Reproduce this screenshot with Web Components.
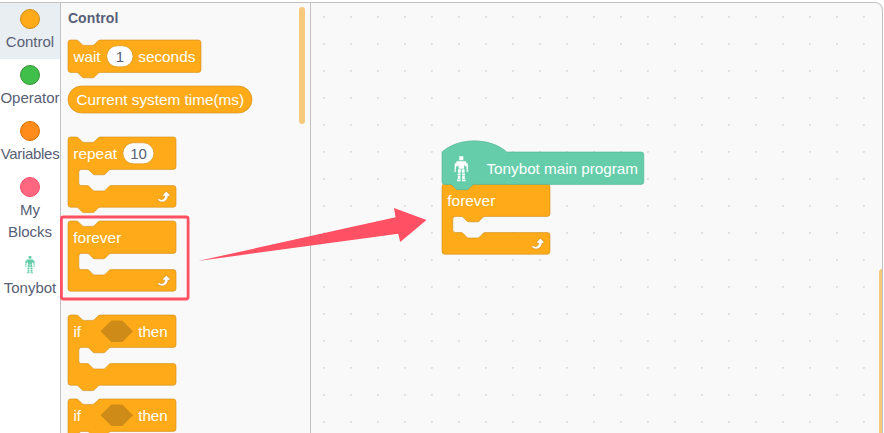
<!DOCTYPE html>
<html lang="en">
<head>
<meta charset="utf-8">
<title>Block editor</title>
<style>
html,body{margin:0;height:100%;overflow:hidden;background:#fff}
body{font-family:"Liberation Sans",Arial,sans-serif;color:#575e75}
</style>
</head>
<body>
<block-editor></block-editor>
<script>
const S = 0.675;
const NOTCH = 'c2 0 3 1 4 2l4 4c1 1 2 2 4 2h12c2 0 3-1 4-2l4-4c1-1 2-2 4-2';
const NOTCH_BACK = 'c-2 0-3 1-4 2l-4 4c-1 1-2 2-4 2h-12c-2 0-3-1-4-2l-4-4c-1-1-2-2-4-2';
const ROBOT = '<path d="M5 0h4v4h-4z M2.2 5h9.6l.6 5h-1.8l-.5-2-.5 4.500h-5.200l-.5-4.500-.5 2h-1.800z M.5 7h1.500l-.3 6.500h-1.500z M12 7h1.500l.3 6.500h-1.500z M0 14h1.800v1.500h-1.800z M12.200 14h1.800v1.500h-1.800z M3.700 13h2.800v3.500h-2.800z M7.500 13h2.800v3.500h-2.800z M3.300 17.300h3v1.500h-3z M7.700 17.300h3v1.500h-3z M3.500 19.400h2.600v3.300h-2.600z M7.900 19.400h2.600v3.300h-2.600z M2.700 23.400h3.600v1.600h-3.600z M7.700 23.400h3.600v1.600h-3.600z"/>';
const LOOP = '<path fill="#cf8b17" d="M23.3 11c-.3.6-.9 1-1.5 1h-1.600c-.1 1.300-.5 2.500-1.100 3.600-.9 1.700-2.300 3.200-4.100 4.100-1.700.9-3.600 1.200-5.500.9-1.800-.3-3.500-1.100-4.900-2.300-.7-.7-.7-1.900 0-2.600.6-.6 1.600-.7 2.300-.2h.1c.9.600 1.900.9 2.900.9s1.900-.3 2.700-.9c1.100-.8 1.800-2.100 1.800-3.500h-1.500c-.9 0-1.700-.7-1.700-1.700 0-.4.2-.9.5-1.200l4.400-4.400c.7-.6 1.700-.6 2.400 0L23 9.200c.5.5.6 1.200.3 1.800z"/><path fill="#fff" stroke="#fff" stroke-width=".5" d="M21.800 11h-2.600c0 1.500-.3 2.900-1 4.200-.8 1.600-2.100 2.800-3.700 3.600-1.500.8-3.300 1.100-4.900.8-1.600-.2-3.200-1-4.400-2.100-.4-.3-.4-.9-.1-1.200.3-.4.9-.4 1.200-.1 1 .7 2.200 1.100 3.400 1.100s2.300-.3 3.300-1c.9-.6 1.600-1.500 2-2.600.3-.9.4-1.800.2-2.800h-2.400c-.4 0-.7-.3-.7-.7 0-.2.1-.3.200-.4l4.400-4.400c.3-.3.7-.3.900 0L22 9.800c.3.300.4.600.3.900s-.3.300-.5.300z"/>';

function define(name, html, after) {
  const t = document.createElement('template');
  t.innerHTML = html;
  customElements.define(name, class extends HTMLElement {
    connectedCallback() {
      if (this.shadowRoot) return;
      this.attachShadow({mode: 'open'}).append(t.content.cloneNode(true));
      if (after) after(this, this.shadowRoot);
    }
  });
}

// Block outlines, in the block renderer's own units.
const shape = {
  stack: w => `M0 4a4 4 0 0 1 4-4H12${NOTCH}H${w-4}a4 4 0 0 1 4 4V44a4 4 0 0 1-4 4H48${NOTCH_BACK}H4a4 4 0 0 1-4-4z`,
  reporter: w => `M20 0H${w-20}a20 20 0 0 1 0 40H20a20 20 0 0 1 0-40z`,
  hat: w => `M0 0C25-22 71-22 96 0H${w-4}a4 4 0 0 1 4 4V44a4 4 0 0 1-4 4H48${NOTCH_BACK}H4a4 4 0 0 1-4-4z`,
  wrap: (w, cap) => `M0 4a4 4 0 0 1 4-4H12${NOTCH}H${w-4}a4 4 0 0 1 4 4V44a4 4 0 0 1-4 4H64${NOTCH_BACK}h-8a4 4 0 0 0-4 4v16a4 4 0 0 0 4 4h8${NOTCH}H${w-4}a4 4 0 0 1 4 4v24a4 4 0 0 1-4 4${cap ? 'H4' : 'H48' + NOTCH_BACK + 'H4'}a4 4 0 0 1-4-4z`
};
const word = (s, x, y, w) => `<text x="${x}" y="${y}" textLength="${w}" lengthAdjust="spacingAndGlyphs">${s}</text>`;
const pill = (x, w, s, tx, tw) => `<rect x="${x}" y="5.8" width="${w}" height="21" rx="10.5" fill="#fff" stroke="#cf8b17" stroke-width=".6"/><text class="value" x="${tx}" y="22" textLength="${tw}">${s}</text>`;
const loop = `<g transform="scale(${S}) translate(128.500 76)">${LOOP}</g>`;
const kinds = {
  wait: {d: shape.stack(197), h: 32.4, body: word('wait', 5.5, 22, 27) + pill(38.7, 26.3, '1', 47.800, 8.300) + word('seconds', 70.300, 22, 57)},
  time: {d: shape.reporter(272.6), h: 27, body: word('Current system time(ms)', 8.500, 19, 167.500)},
  repeat: {d: shape.wrap(160), h: 70.2, body: word('repeat', 5.3, 22, 43.700) + pill(54.9, 31, '10', 62.3, 16.500) + loop},
  forever: {d: shape.wrap(160, true), h: 70.2, body: word('forever', 5.3, 22, 48) + loop},
  if: {d: shape.wrap(160), h: 70.2, body: word('if', 5.5, 22, 7.500) + '<path d="M32.600 16.200 43.300 5.400H54.300L65 16.200 54.300 27H43.300z" fill="#cf8b17"/>' + word('then', 70.200, 22, 29.500)},
  main: {d: shape.hat(299), h: 32.4, green: true, body: `<g fill="#fff" transform="translate(12.300 4.200)">${ROBOT}</g>` + word('Tonybot main program', 44.500, 21.500, 151.500)}
};

define('code-block', `<style>
:host{display:block;flex:none}
svg{display:block;overflow:visible;width:210px}
.edge{fill:#ffab19;stroke:#cf8b17;stroke-width:.9}
.green{fill:#66cdaa;stroke:#52b393}
text{font:15px "Liberation Sans",Arial,sans-serif;fill:#fff}
.value{fill:#575e75}
</style><svg></svg>`, (el, root) => {
  const k = kinds[el.getAttribute('kind')], svg = root.querySelector('svg');
  svg.setAttribute('height', k.h);
  svg.innerHTML = `<path class="edge ${k.green ? 'green' : ''}" transform="scale(${S})" d="${k.d}"/>${k.body}`;
});

define('category-item', `<style>
:host{display:flex;flex-direction:column;align-items:center;gap:2px;padding:6px 0;font-size:15px;line-height:22px}
:host([selected]){background:#e9eef2}
i{width:20px;height:20px;box-sizing:border-box;border-radius:50%;background:var(--dot);border:1px solid var(--rim)}
svg{width:20px;height:20px;fill:#66cdaa}
.label{text-align:center;align-self:stretch;white-space:nowrap}
:host([tight]) .label{letter-spacing:-.3px}
</style><span class="icon" style="display:contents"><i></i></span><div class="label"><slot></slot></div>`, (el, root) => {
  if (el.hasAttribute('robot')) root.querySelector('.icon').innerHTML = `<svg viewBox="-7.500 -1.500 29 29">${ROBOT}</svg>`;
});

define('category-menu', `<style>
:host{display:flex;flex-direction:column;width:60px;flex:none;background:#fff;overflow:hidden}
</style><slot></slot>`);

define('block-flyout', `<style>
:host{display:flex;width:249px;flex:none;box-sizing:content-box;border-left:1px solid #c1c1c1;border-right:1px solid #c1c1c1;background:#f9f9f9;overflow:hidden}
.list{flex:1;padding:7px 0 0 6.900px}
h2{margin:0 0 15px;font-size:14px;line-height:17px;font-weight:bold;letter-spacing:.12px;height:15.200px}
.track{width:6px;margin:4px 5px 0 0}
.thumb{height:117px;border-radius:3px;background:#f6c97c}
</style><div class="list"><h2>Control</h2><slot></slot></div><div class="track"><div class="thumb"></div></div>`);

define('block-canvas', `<style>
:host{display:block;position:relative;flex:1;border-right:1px solid #c1c1c1;border-top-right-radius:8px;overflow:hidden;background:#f9f9f9}
.grid{display:block;width:100%;height:100%}
::slotted(code-block){position:absolute}
.thumb{position:absolute;right:-3px;top:266px;width:6px;height:190px;border-radius:3px;background:#f6c97c}
</style><svg class="grid"><defs><pattern id="dots" width="27" height="27" x="12" y="13" patternUnits="userSpaceOnUse"><path d="M0 0h2v1h-1v1h-1z" fill="#e0e0e0"/><path d="M1 1h1v1h-1z" fill="#eaeaea"/></pattern></defs><rect width="100%" height="100%" fill="url(#dots)"/></svg><slot></slot><div class="thumb"></div>`);

define('drag-hint', `<style>
:host{position:absolute;inset:0;pointer-events:none}
svg{display:block;width:100%;height:100%}
</style><svg><rect x="61.400" y="217" width="126.700" height="82" rx="2" fill="none" stroke="#ff5064" stroke-width="2.800"/><path d="M198 261 395.600 217.200 394 208 426.500 220 400.200 242 398.200 233.700z" fill="#ff5064"/></svg>`);

define('block-editor', `<style>
:host{display:block;position:relative;width:884px;height:433px;overflow:hidden}
.frame{display:flex;margin-top:2px;height:431px;width:883px;box-sizing:border-box;border-top:1px solid #c1c1c1;border-top-right-radius:8px}
</style>
<div class="frame">
<category-menu>
<category-item selected style="--dot:#ffab19;--rim:#cf8b17">Control</category-item>
<category-item style="--dot:#40bf4a;--rim:#389438">Operator</category-item>
<category-item tight style="--dot:#ff8c1a;--rim:#db6e00">Variables</category-item>
<category-item style="--dot:#ff6680;--rim:#ff4d6a">My<br>Blocks</category-item>
<category-item robot>Tonybot</category-item>
</category-menu>
<block-flyout>
<code-block kind="wait"></code-block>
<code-block kind="time" style="margin-top:13.600px"></code-block>
<code-block kind="repeat" style="margin-top:24.200px"></code-block>
<code-block kind="forever" style="margin-top:13.500px"></code-block>
<code-block kind="if" style="margin-top:24.200px"></code-block>
<code-block kind="if" style="margin-top:13.500px"></code-block>
</block-flyout>
<block-canvas>
<code-block kind="forever" style="left:130.900px;top:181.300px"></code-block>
<code-block kind="main" style="left:130.900px;top:148.900px"></code-block>
</block-canvas>
</div>
<drag-hint></drag-hint>`);
</script>
</body>
</html>
